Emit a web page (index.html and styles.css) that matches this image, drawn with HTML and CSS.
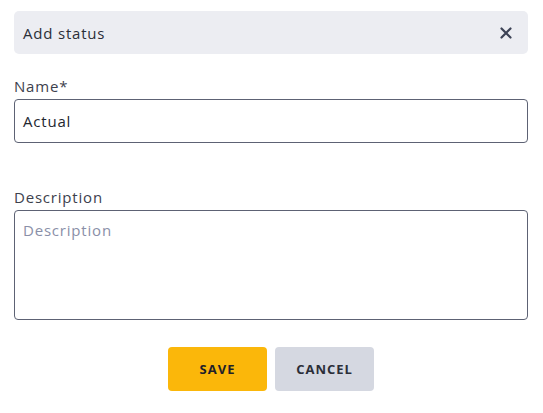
FILE: index.html
```html
<!DOCTYPE html>
<html>
<head>
<meta charset="utf-8">
<link rel="stylesheet" href="styles.css">
</head>
<body>
<div class="dialog">
  <div class="header">
    <span class="title">Add status</span>
    <svg class="close" width="12" height="12" viewBox="0 0 12 12"><path d="M1.5 1.5 L10.5 10.5 M10.5 1.5 L1.5 10.5" stroke="#3d4356" stroke-width="2.2" stroke-linecap="round"/></svg>
  </div>
  <div class="field">
    <label class="label">Name*</label>
    <div class="input">Actual</div>
  </div>
  <div class="field desc">
    <label class="label">Description</label>
    <div class="textarea">Description</div>
  </div>
  <div class="actions">
    <button class="btn save">SAVE</button>
    <button class="btn cancel">CANCEL</button>
  </div>
</div>
</body>
</html>
```
FILE: styles.css
```css
html, body {
  margin: 0;
  padding: 0;
  background: #ffffff;
}
body {
  font-family: "Open Sans", "Noto Sans", sans-serif;
  color: #2b2e38;
}
.dialog {
  width: 514px;
  padding: 11px 0 0 14px;
}
.header {
  height: 43px;
  background: #ecedf2;
  border-radius: 5px;
  display: flex;
  align-items: center;
  justify-content: space-between;
  padding: 0 16px 0 9px;
  box-sizing: border-box;
}
.title {
  font-size: 15px;
  color: #2b2e38;
  letter-spacing: 0.8px;
}
.close {
  display: block;
}
.field {
  display: flex;
  flex-direction: column;
  gap: 3px;
  margin-top: 22px;
}
.field.desc {
  margin-top: 44px;
}
.label {
  font-size: 15px;
  line-height: 20px;
  color: #3d414d;
  letter-spacing: 0.8px;
}
.input {
  height: 44px;
  box-sizing: border-box;
  border: 1px solid #5d6274;
  border-radius: 4px;
  padding: 0 8px;
  display: flex;
  align-items: center;
  font-size: 15px;
  color: #23262f;
  letter-spacing: 0.8px;
}
.textarea {
  height: 110px;
  box-sizing: border-box;
  border: 1px solid #5d6274;
  border-radius: 4px;
  padding: 9px 8px;
  font-size: 15px;
  line-height: 20px;
  color: #8a8fa8;
  letter-spacing: 0.8px;
}
.actions {
  display: flex;
  justify-content: center;
  gap: 8px;
  margin-top: 27px;
}
.btn {
  width: 99px;
  height: 44px;
  border: none;
  border-radius: 4px;
  font-family: "Open Sans", "Noto Sans", sans-serif;
  font-weight: 700;
  font-size: 13px;
  color: #1f2129;
  letter-spacing: 1px;
}
.save {
  background: #fbb70a;
}
.cancel {
  background: #d5d8e1;
  color: #2b2e38;
}
```
